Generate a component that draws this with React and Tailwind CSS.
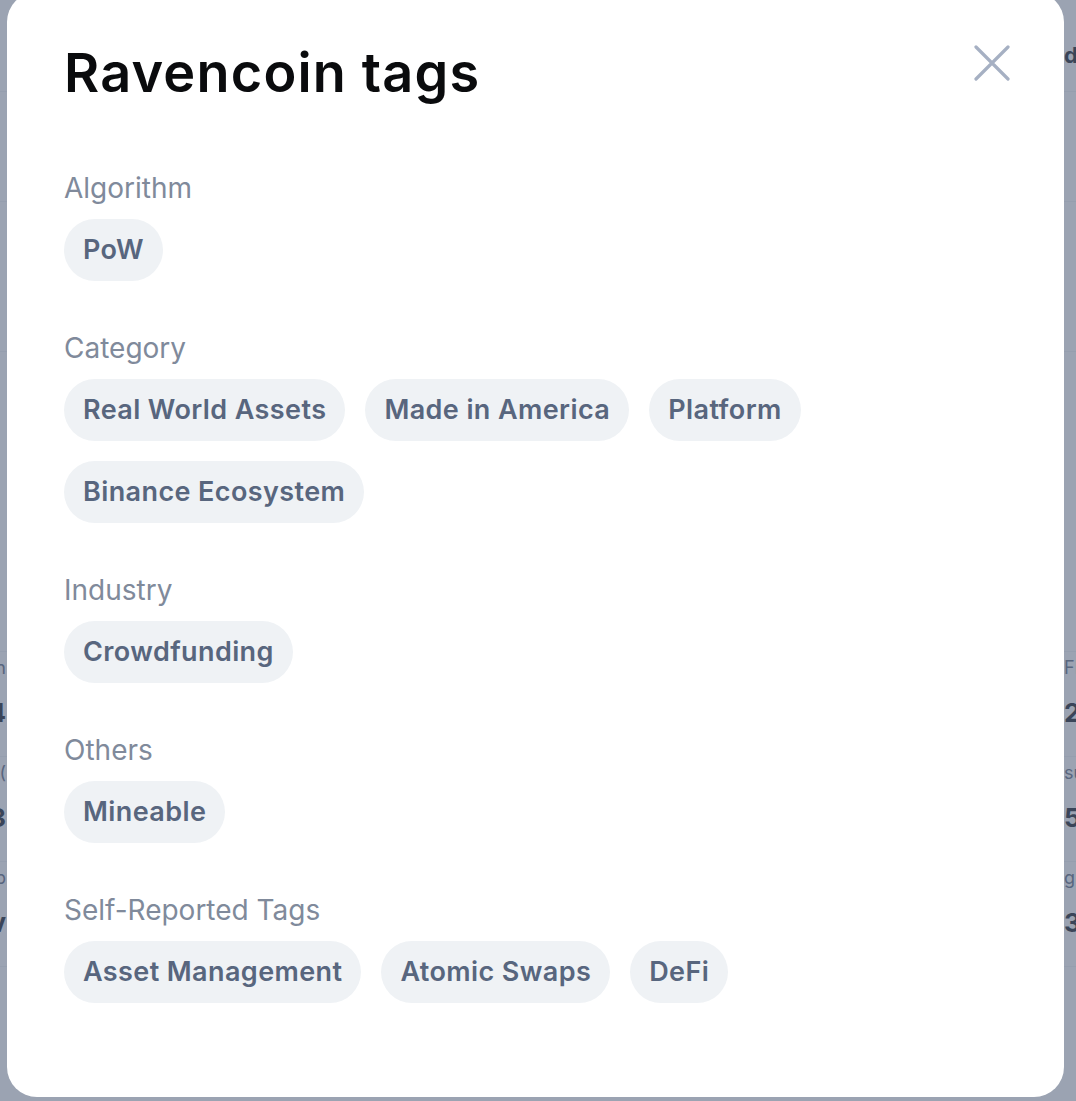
import React from 'react';

const sections = [
  { title: 'Algorithm', tags: ['PoW'] },
  {
    title: 'Category',
    tags: ['Real World Assets', 'Made in America', 'Platform', 'Binance Ecosystem'],
  },
  { title: 'Industry', tags: ['Crowdfunding'] },
  { title: 'Others', tags: ['Mineable'] },
  { title: 'Self-Reported Tags', tags: ['Asset Management', 'Atomic Swaps', 'DeFi'] },
];

// stat cells of the page behind the dialog; only their edges peek out
const stats = [
  { left: ['Vol 24h', '1.24'], right: ['FDV', '2.1B'] },
  { left: ['Supply (', '13'], right: ['supply', '5E'] },
  { left: ['Cap', '4.8Bv'], right: ['g', '3'] },
];

function CloseIcon() {
  return (
    <svg width="36" height="36" viewBox="0 0 36 36" fill="none">
      <path
        d="M2 2L34 34M34 2L2 34"
        stroke="#a6b0c3"
        strokeWidth="3.2"
        strokeLinecap="round"
      />
    </svg>
  );
}

function Tag({ label }) {
  return (
    <span className="h-[62px] px-[19px] flex items-center rounded-full bg-[#eff2f5] text-[27px] tracking-[0.4px] font-semibold text-[#58667e]">
      {label}
    </span>
  );
}

function BackgroundPage() {
  return (
    <div className="h-full bg-white font-['Inter',sans-serif]">
      <div className="h-[72px] flex justify-end items-end">
        <span className="mr-[-60px] w-[72px] text-[22px] font-bold text-[#0d1421]">dd</span>
      </div>
      <div className="h-[20px] border-b border-[#eff2f5]" />
      <div className="h-[110px] border-b border-[#eff2f5]" />
      <div className="h-[150px] border-b border-[#eff2f5]" />
      <div className="h-[300px] border-b border-[#eff2f5]" />
      {stats.map((row, i) => (
        <div key={i} className="border-b border-[#eff2f5] pt-[2px] pb-[24px] flex justify-between">
          <div className="ml-[-200px] w-[206px] text-right">
            <div className="text-[18px] text-[#58667e]">{row.left[0]}</div>
            <div className="mt-[12px] text-[26px] font-bold text-[#0d1421]">{row.left[1]}</div>
          </div>
          <div className="mr-[-200px] w-[212px]">
            <div className="text-[18px] text-[#58667e]">{row.right[0]}</div>
            <div className="mt-[12px] text-[26px] font-bold text-[#0d1421]">{row.right[1]}</div>
          </div>
        </div>
      ))}
    </div>
  );
}

export default function App() {
  return (
    <div className="relative w-[1076px] h-[1101px] overflow-hidden font-['Inter',sans-serif]">
      <BackgroundPage />
      <div className="absolute inset-0 bg-[#58667e]/60" />

      <div className="absolute left-[7px] top-[-8px] w-[1057px] h-[1105px] bg-white rounded-[30px] pl-[57px] pr-[54px] pt-[50px]">
        <div className="flex items-start justify-between">
          <h1 className="text-[54px] leading-[62px] tracking-[1.2px] font-semibold text-[#0a0b0d]">
            Ravencoin tags
          </h1>
          <button className="mt-[3px]">
            <CloseIcon />
          </button>
        </div>

        <div className="mt-[68px] flex flex-col gap-[51px]">
          {sections.map((s) => (
            <div key={s.title}>
              <div className="text-[28px] leading-[32px] text-[#808a9b]">{s.title}</div>
              <div className="mt-[15px] flex flex-wrap gap-[20px] pr-[200px]">
                {s.tags.map((t) => (
                  <Tag key={t} label={t} />
                ))}
              </div>
            </div>
          ))}
        </div>
      </div>
    </div>
  );
}
